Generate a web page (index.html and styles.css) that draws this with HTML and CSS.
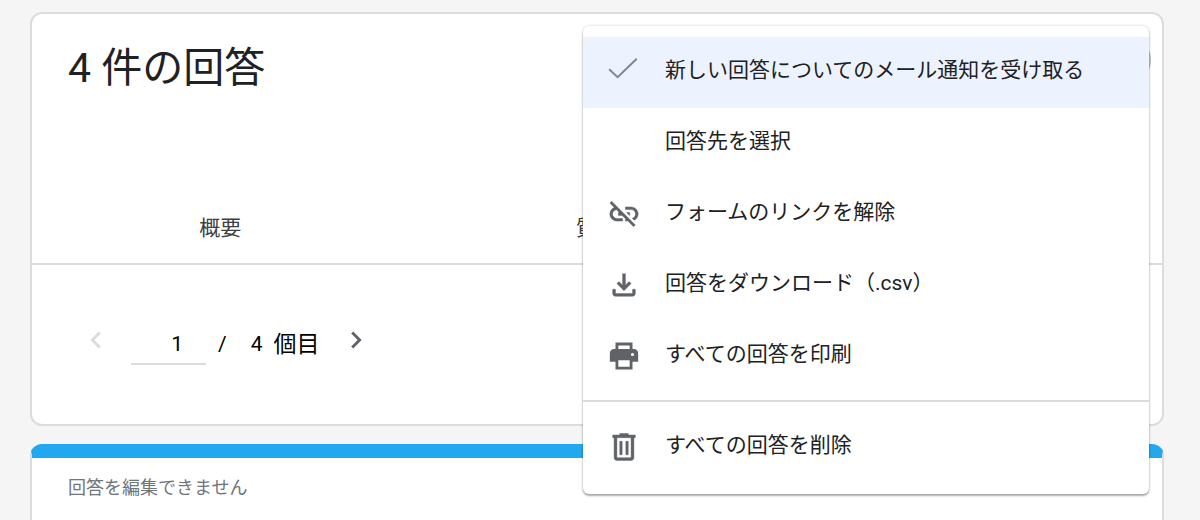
FILE: index.html
```html
<!DOCTYPE html>
<html lang="ja">
<head>
<meta charset="utf-8">
<meta name="viewport" content="width=device-width, initial-scale=1">
<title>4 件の回答</title>
<link rel="stylesheet" href="styles.css">
</head>
<body>
<main class="page">
  <section class="card summary">
    <header class="summary-header">
      <h1 class="title">4 件の回答</h1>
      <button class="more" type="button" aria-label="その他" aria-haspopup="menu" aria-expanded="true"></button>
    </header>
    <nav class="tabs">
      <a class="tab" href="#summary">概要</a>
      <a class="tab" href="#question">質問</a>
    </nav>
    <div class="pager">
      <button class="pager-button" type="button" aria-label="前へ" disabled>
        <svg class="icon" viewBox="0 0 24 24"><path d="M15.41 7.41 14 6l-6 6 6 6 1.41-1.41L10.83 12z"/></svg>
      </button>
      <input class="pager-input" type="text" inputmode="numeric" value="1" aria-label="回答の番号">
      <span class="slash">/</span>
      <span class="total">4</span>
      <span class="unit">個目</span>
      <button class="pager-button next" type="button" aria-label="次へ">
        <svg class="icon" viewBox="0 0 24 24"><path d="M8.59 16.59 10 18l6-6-6-6-1.41 1.41L13.17 12z"/></svg>
      </button>
    </div>
    <div class="menu" role="menu">
      <button class="menu-item selected" type="button" role="menuitemcheckbox" aria-checked="true">
        <svg class="icon check" viewBox="0 0 24 24"><path d="M1.5 10 7.5 15.6 21 2.6" fill="none" stroke="currentColor" stroke-width="1.4"/></svg>
        <span class="label">新しい回答についてのメール通知を受け取る</span>
      </button>
      <button class="menu-item" type="button" role="menuitem">
        <span class="icon"></span>
        <span class="label">回答先を選択</span>
      </button>
      <button class="menu-item" type="button" role="menuitem">
        <svg class="icon" viewBox="0 0 24 24"><path d="M17 7h-4v1.9h4c1.71 0 3.1 1.39 3.1 3.1 0 1.43-.98 2.63-2.31 2.98l1.46 1.46C20.88 15.61 22 13.95 22 12c0-2.76-2.24-5-5-5zm-1 4h-2.19l2 2H16v-2zM2 4.27l3.11 3.11C3.29 8.12 2 9.91 2 12c0 2.76 2.24 5 5 5h4v-1.9H7c-1.71 0-3.1-1.39-3.1-3.1 0-1.59 1.21-2.9 2.76-3.07L8.73 11H8v2h2.73L13 15.27V17h1.73l4.01 4L20 19.74 3.27 3 2 4.27z" stroke="currentColor" stroke-width=".3"/></svg>
        <span class="label">フォームのリンクを解除</span>
      </button>
      <button class="menu-item" type="button" role="menuitem">
        <svg class="icon" viewBox="0 0 24 24"><path d="M18 15v3H6v-3H4v3c0 1.1.9 2 2 2h12c1.1 0 2-.9 2-2v-3h-2zM17 11l-1.41-1.41L13 12.17V4h-2v8.17L8.41 9.59 7 11l5 5 5-5z" stroke="currentColor" stroke-width=".3"/></svg>
        <span class="label">回答をダウンロード（.csv）</span>
      </button>
      <button class="menu-item" type="button" role="menuitem">
        <svg class="icon" viewBox="0 0 24 24"><path fill-rule="evenodd" d="M18 7V2.500H6V7H5c-1.660 0-3 1.340-3 3v6h4v5.500h12V16h4v-6c0-1.660-1.340-3-3-3h-1zM8 4.500h8V7H8V4.500zM16 19.500H8V15h8v4.500zM18 12a1.100 1.100 0 1 1 0-2.200 1.100 1.100 0 0 1 0 2.200z"/></svg>
        <span class="label">すべての回答を印刷</span>
      </button>
      <hr class="menu-divider">
      <button class="menu-item" type="button" role="menuitem">
        <svg class="icon" viewBox="0 0 24 24"><path fill-rule="evenodd" d="M15 3.500V2.500H9v1H4v2h1V19.500c0 1.100.9 2 2 2h10c1.100 0 2-.9 2-2V5.500h1v-2h-5zM17 19.500H7V5.500h10v14zM9 8h1.700v9.500H9V8zM13.300 8H15v9.500h-1.700V8z" stroke="currentColor" stroke-width=".3"/></svg>
        <span class="label">すべての回答を削除</span>
      </button>
    </div>
  </section>
  <section class="card response">
    <p class="notice">回答を編集できません</p>
  </section>
</main>
</body>
</html>
```
FILE: styles.css
```css
* {
  box-sizing: border-box;
}

body {
  margin: 0;
  background: #f5f5f5;
  color: #202124;
  font-family: Roboto, "Noto Sans CJK JP", sans-serif;
  font-size: 21px;
}

button,
input {
  margin: 0;
  padding: 0;
  border: 0;
  background: none;
  color: inherit;
  font: inherit;
}

.page {
  display: flex;
  flex-direction: column;
  gap: 18px;
  min-height: 100vh;
  padding: 12px 36px 0 30px;
}

.card {
  border: 2px solid #dadce0;
  border-radius: 12px;
  background: #fff;
}

.summary {
  position: relative;
}

.summary-header {
  display: flex;
  justify-content: space-between;
  align-items: flex-start;
  height: 179px;
  padding: 18px 11px 0 36px;
}

.title {
  margin: 0;
  padding-top: 6px;
  font-size: 41px;
  font-weight: 400;
  line-height: 60px;
}

.more {
  width: 56px;
  height: 56px;
  border-radius: 50%;
  background: #bdc1c6;
}

.tabs {
  display: grid;
  grid-template-columns: repeat(3, 1fr);
  border-bottom: 2px solid #dadce0;
}

.tab {
  color: #3c4043;
  font-weight: 400;
  line-height: 70px;
  text-align: center;
  text-decoration: none;
}

.pager {
  display: flex;
  align-items: flex-start;
  padding: 57px 47px;
  color: #000;
  line-height: 45px;
}

.icon {
  display: block;
  flex: none;
  width: 34px;
  height: 34px;
  fill: currentColor;
}

.pager-button {
  padding-top: 1px;
  color: #5f6368;
}

.pager-button:disabled {
  color: #dadce0;
}

.pager-input {
  width: 75px;
  height: 43px;
  margin: 0 12px 0 18px;
  padding: 3px 23px 0 0;
  border-bottom: 2px solid #dadce0;
  text-align: right;
}

.total {
  margin: 0 11px 0 24px;
}

.unit {
  font-size: 23px;
}

.next {
  margin-left: 20px;
}

.menu {
  position: absolute;
  top: 12px;
  right: 13px;
  width: calc(50% + 1px);
  min-width: 500px;
  padding: 11px 0;
  border-radius: 6px;
  background: #fff;
  box-shadow: 0 2px 2px rgba(0, 0, 0, 0.3), 0 0 3px rgba(0, 0, 0, 0.2);
}

.menu-item {
  display: flex;
  align-items: center;
  gap: 24px;
  width: 100%;
  height: 71px;
  padding: 0 0 2px 24px;
  text-align: left;
  white-space: nowrap;
}

.label {
  padding-bottom: 7px;
}

.menu-item .icon {
  color: #5f6368;
}

.menu-item .check {
  color: #80868b;
}

.selected {
  background: #ecf3fe;
}

.menu-divider {
  height: 2px;
  margin: 8px 0 10px;
  border: 0;
  background: #dadce0;
}

.response {
  flex: 1;
  border-top: 14px solid #21a8ef;
  border-bottom: 0;
  border-radius: 12px 12px 0 0;
}

.notice {
  margin: 0;
  padding: 14px 36px;
  color: #70757a;
  font-size: 18px;
  line-height: 32px;
}
```
